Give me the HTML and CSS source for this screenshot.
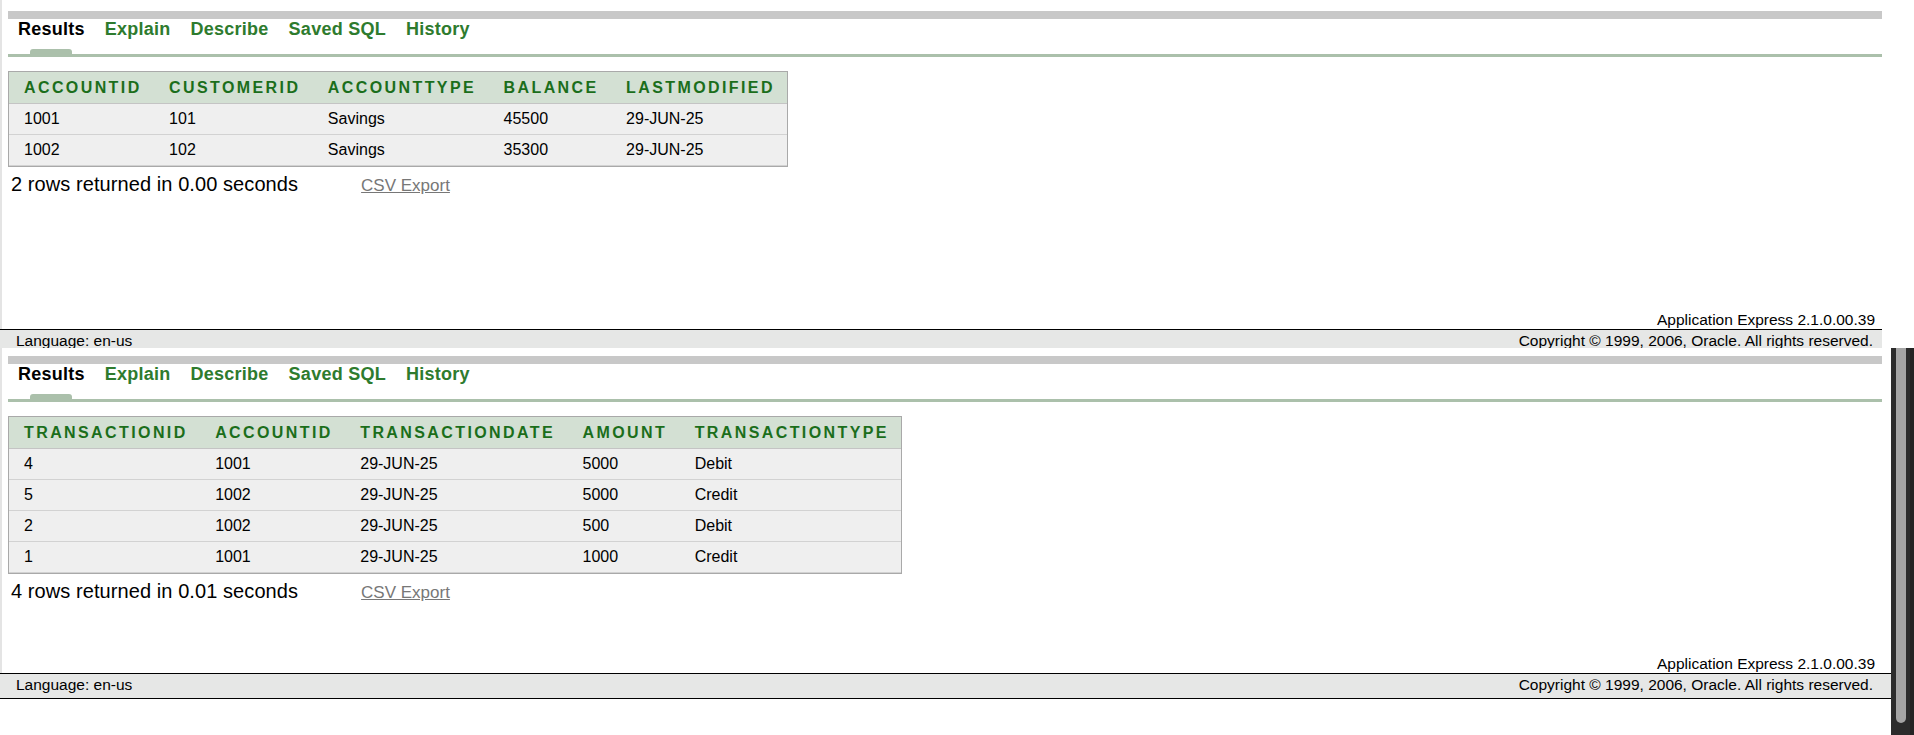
FILE: index.html
```html
<!DOCTYPE html>
<html lang="en">
<head>
<meta charset="utf-8">
<title>SQL Commands - Results</title>
<link rel="stylesheet" href="styles.css">
</head>
<body>
<div class="screen">
  <section class="frame frame--first">
    <div class="frame-body">
      <div class="main main--first">
        <div class="topbar"></div>
        <nav class="tabs">
          <div class="tab tab--active"><span class="tab-label">Results</span><span class="tab-pill"></span></div>
          <div class="tab"><span class="tab-label">Explain</span></div>
          <div class="tab"><span class="tab-label">Describe</span></div>
          <div class="tab"><span class="tab-label">Saved SQL</span></div>
          <div class="tab"><span class="tab-label">History</span></div>
        </nav>
        <div class="tabline"></div>
        <table class="report">
          <thead>
            <tr><th>ACCOUNTID</th><th>CUSTOMERID</th><th>ACCOUNTTYPE</th><th>BALANCE</th><th>LASTMODIFIED</th></tr>
          </thead>
          <tbody>
            <tr><td>1001</td><td>101</td><td>Savings</td><td>45500</td><td>29-JUN-25</td></tr>
            <tr><td>1002</td><td>102</td><td>Savings</td><td>35300</td><td>29-JUN-25</td></tr>
          </tbody>
        </table>
        <div class="summary"><span class="summary-text">2 rows returned in 0.00 seconds</span><a class="csv" href="#">CSV Export</a></div>
      </div>
      <footer class="footer">
        <div class="version">Application Express 2.1.0.00.39</div>
        <div class="footbar"><span>Language: en-us</span><span>Copyright © 1999, 2006, Oracle. All rights reserved.</span></div>
      </footer>
    </div>
  </section>

  <section class="frame frame--second">
    <div class="frame-body">
      <div class="main main--second">
        <div class="topbar"></div>
        <nav class="tabs">
          <div class="tab tab--active"><span class="tab-label">Results</span><span class="tab-pill"></span></div>
          <div class="tab"><span class="tab-label">Explain</span></div>
          <div class="tab"><span class="tab-label">Describe</span></div>
          <div class="tab"><span class="tab-label">Saved SQL</span></div>
          <div class="tab"><span class="tab-label">History</span></div>
        </nav>
        <div class="tabline"></div>
        <table class="report">
          <thead>
            <tr><th>TRANSACTIONID</th><th>ACCOUNTID</th><th>TRANSACTIONDATE</th><th>AMOUNT</th><th>TRANSACTIONTYPE</th></tr>
          </thead>
          <tbody>
            <tr><td>4</td><td>1001</td><td>29-JUN-25</td><td>5000</td><td>Debit</td></tr>
            <tr><td>5</td><td>1002</td><td>29-JUN-25</td><td>5000</td><td>Credit</td></tr>
            <tr><td>2</td><td>1002</td><td>29-JUN-25</td><td>500</td><td>Debit</td></tr>
            <tr><td>1</td><td>1001</td><td>29-JUN-25</td><td>1000</td><td>Credit</td></tr>
          </tbody>
        </table>
        <div class="summary"><span class="summary-text">4 rows returned in 0.01 seconds</span><a class="csv" href="#">CSV Export</a></div>
      </div>
      <footer class="footer">
        <div class="version">Application Express 2.1.0.00.39</div>
        <div class="footbar"><span>Language: en-us</span><span>Copyright © 1999, 2006, Oracle. All rights reserved.</span></div>
      </footer>
    </div>
    <div class="scrollbar"><div class="scrollbar-thumb"></div></div>
  </section>
</div>
</body>
</html>
```

FILE: styles.css
```css
* { box-sizing: border-box; }

html, body {
  margin: 0;
  padding: 0;
  background: #ffffff;
}

body {
  font-family: "Liberation Sans", Arial, sans-serif;
  color: #000;
  width: 1914px;
  height: 735px;
  overflow: hidden;
}

.screen {
  display: flex;
  flex-direction: column;
}

.frame {
  display: flex;
  overflow: hidden;
  flex: none;
}

.frame--first {
  width: 1882px;
  height: 348px;
}

.frame--second {
  width: 1914px;
  height: 387px;
}

.frame-body {
  flex: 1;
  display: flex;
  flex-direction: column;
  min-width: 0;
}

.main {
  flex: none;
  border-left: 2px solid #e4e4e4;
  padding-left: 6px;
  display: flex;
  flex-direction: column;
  align-items: flex-start;
}

.main--first {
  height: 311px;
  padding-top: 11px;
}

.main--second {
  height: 307px;
  padding-top: 8px;
  padding-right: 9px;
}

.topbar {
  align-self: stretch;
  height: 8px;
  background: #c8c8c8;
}

.tabs {
  display: flex;
  height: 35px;
}

.tab {
  display: flex;
  flex-direction: column;
  align-items: center;
  padding: 0 10px;
}

.tab-label {
  font-size: 18px;
  font-weight: bold;
  letter-spacing: 0.25px;
  line-height: 21px;
  color: #2e7b2e;
}

.tab--active .tab-label {
  color: #000;
}

.tab-pill {
  margin-top: auto;
  width: 42px;
  height: 5px;
  background: #abc0ab;
  border-radius: 3px 3px 0 0;
}

.tabline {
  align-self: stretch;
  height: 3px;
  background: #abc0ab;
}

.report {
  margin-top: 14px;
  border: 1px solid #a9a9a9;
  border-collapse: separate;
  border-spacing: 0;
}

.report th {
  height: 32px;
  padding: 0 12.5px 0 15px;
  background: #d3e0d3;
  color: #1b6e1b;
  font-size: 16px;
  font-weight: bold;
  letter-spacing: 2.4px;
  text-align: left;
  white-space: nowrap;
  border-bottom: 1px solid #c4c4c4;
}

.report td {
  height: 31px;
  padding: 0 12.5px 0 15px;
  background: #efefef;
  font-size: 16px;
  text-align: left;
  white-space: nowrap;
  border-bottom: 1px solid #d2d2d2;
}

.summary {
  margin-top: 6px;
  padding-left: 3px;
  display: flex;
  align-items: baseline;
  line-height: 23px;
}

.summary-text {
  font-size: 20px;
  letter-spacing: 0.08px;
}

.csv {
  margin-left: 63px;
  font-size: 17px;
  color: #777;
  text-decoration: underline;
}

.footer {
  display: flex;
  flex-direction: column;
  font-size: 15.5px;
  line-height: 18px;
}

.version {
  text-align: right;
  padding-right: 7px;
  border-left: 2px solid #e4e4e4;
}

.footbar {
  display: flex;
  justify-content: space-between;
  background: #e6e7e6;
  border-top: 1px solid #000;
  border-bottom: 1px solid #000;
  padding: 2px 9px 4px 16px;
}

.frame--second .version {
  padding-right: 16px;
}

.frame--second .footbar {
  padding-right: 18px;
}

.scrollbar {
  width: 23px;
  flex: none;
  background: #2c2c2c;
  border-right: 4px solid #242424;
  padding-left: 5px;
}

.scrollbar-thumb {
  width: 10px;
  height: 375px;
  background: #a5a5a5;
  border-radius: 0 0 5px 5px;
}
```
